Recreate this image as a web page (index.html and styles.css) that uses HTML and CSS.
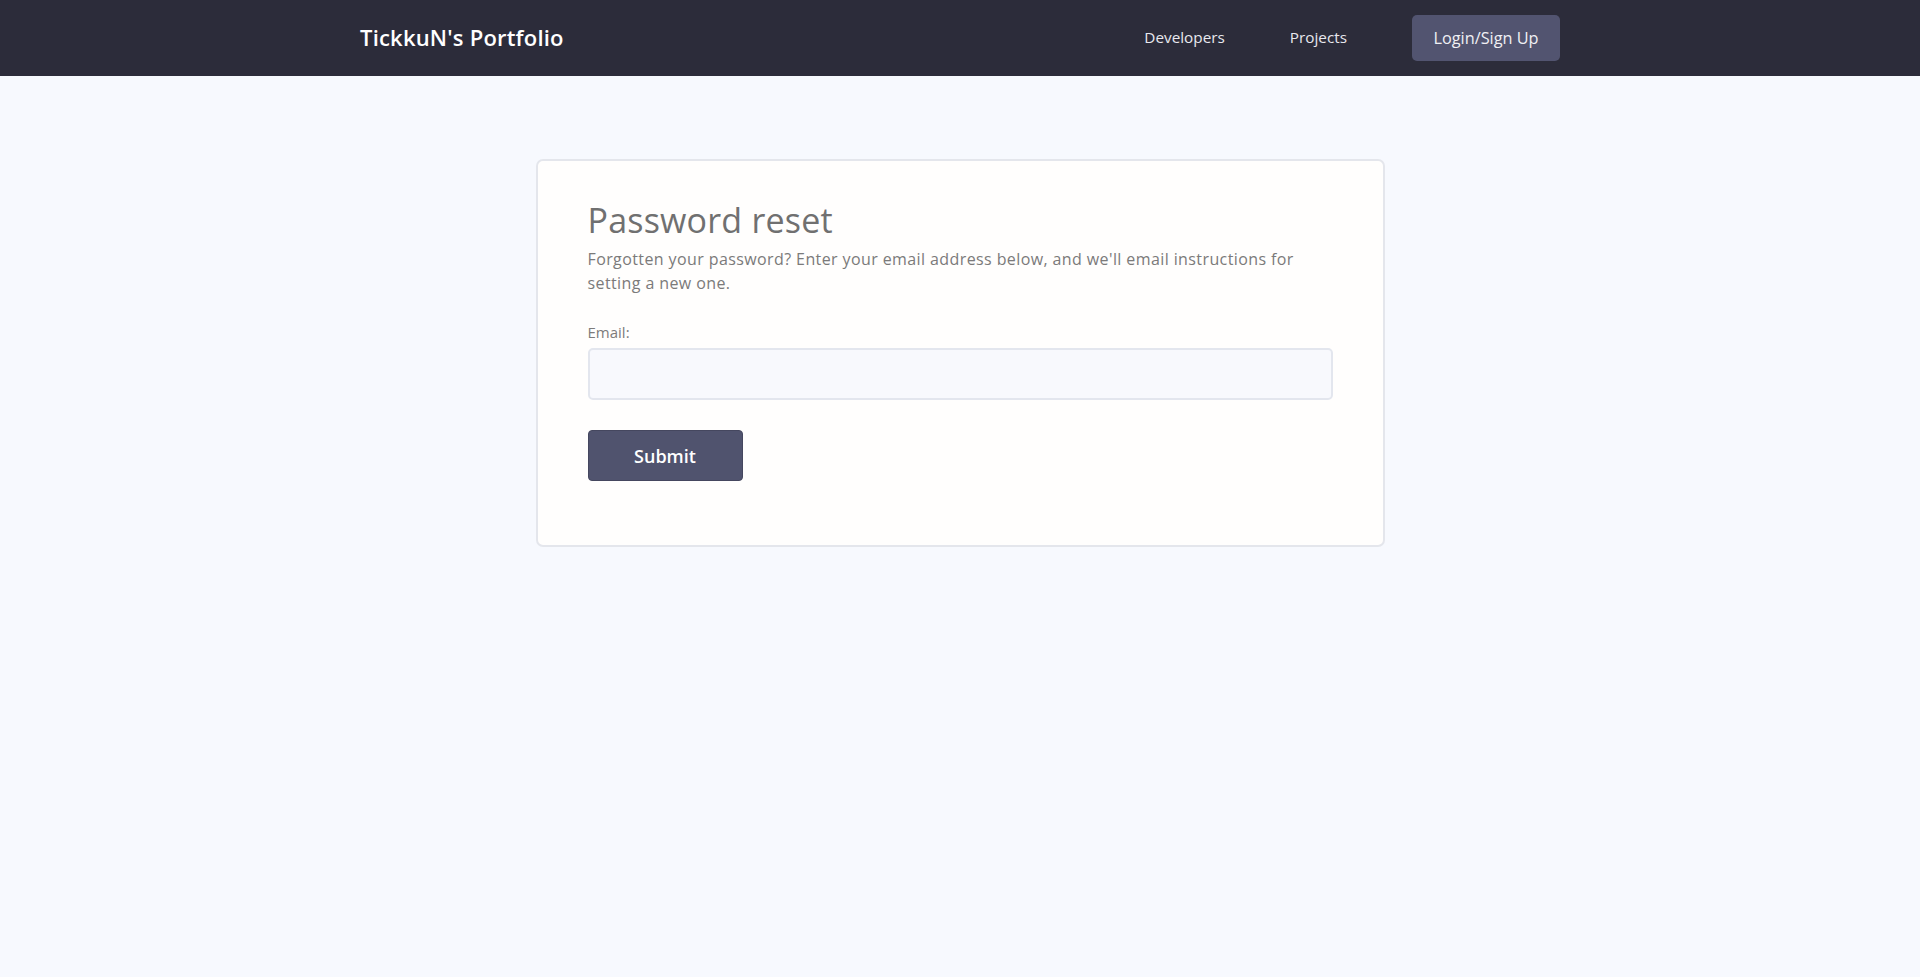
FILE: index.html
```html
<!DOCTYPE html>
<html lang="en">
<head>
<meta charset="utf-8">
<title>Password reset</title>
<link rel="stylesheet" href="styles.css">
</head>
<body>
<header class="navbar">
  <div class="nav-inner">
    <a class="brand" href="#">TickkuN's Portfolio</a>
    <nav class="nav-links">
      <a class="nav-link" href="#">Developers</a>
      <a class="nav-link" href="#">Projects</a>
      <a class="nav-btn" href="#">Login/Sign Up</a>
    </nav>
  </div>
</header>
<main class="main">
  <section class="card">
    <h1 class="title">Password reset</h1>
    <p class="lead">Forgotten your password? Enter your email address below, and we'll email instructions for setting a new one.</p>
    <form class="form">
      <label class="label" for="email">Email:</label>
      <input class="input" id="email" type="email">
      <button class="submit" type="button">Submit</button>
    </form>
  </section>
</main>
</body>
</html>
```
FILE: styles.css
```css
* { box-sizing: border-box; }
html, body { margin: 0; padding: 0; }
body {
  background: #f7f9fe;
  font-family: "Open Sans", "Noto Sans", sans-serif;
  min-height: 977px;
}
.navbar {
  background: #2c2c3a;
  height: 76px;
}
.nav-inner {
  width: 1200px;
  margin: 0 auto;
  height: 76px;
  display: flex;
  align-items: center;
  justify-content: space-between;
}
.brand {
  color: #ffffff;
  font-size: 22px;
  font-weight: 600;
  letter-spacing: 0.2px;
  text-decoration: none;
  margin-top: -2px;
}
.nav-links {
  display: flex;
  align-items: center;
  gap: 65px;
}
.nav-link {
  color: #e8e8ee;
  font-size: 15.3px;
  text-decoration: none;
  margin-top: -2px;
}
.nav-btn {
  display: flex;
  align-items: center;
  justify-content: center;
  width: 148px;
  height: 46px;
  background: #525470;
  color: #f0f0f4;
  font-size: 16.3px;
  border-radius: 5px;
  text-decoration: none;
}
.main {
  display: flex;
  justify-content: center;
  padding-top: 83px;
}
.card {
  width: 849px;
  background: #fffefd;
  border: 2px solid #e4e6ec;
  border-radius: 7px;
  padding: 37px 50px 64px;
}
.title {
  margin: 0;
  color: #707070;
  font-size: 34px;
  font-weight: 500;
  letter-spacing: 0.2px;
  line-height: 44px;
}
.lead {
  margin: 5px 0 0;
  color: #7b7a7a;
  font-size: 16px;
  letter-spacing: 0.4px;
  line-height: 24px;
}
.form {
  display: flex;
  flex-direction: column;
  align-items: flex-start;
  margin-top: 27px;
}
.label {
  color: #7d7b7b;
  font-size: 15px;
  line-height: 20px;
}
.input {
  width: 100%;
  height: 52px;
  margin-top: 6px;
  background: #f8f9fd;
  border: 2px solid #e3e6ee;
  border-radius: 5px;
}
.submit {
  margin-top: 30px;
  width: 155px;
  height: 51px;
  background: #50536e;
  border: 1px solid #45475f;
  border-radius: 4px;
  color: #ffffff;
  font-family: inherit;
  font-size: 18px;
  font-weight: 600;
}
```
